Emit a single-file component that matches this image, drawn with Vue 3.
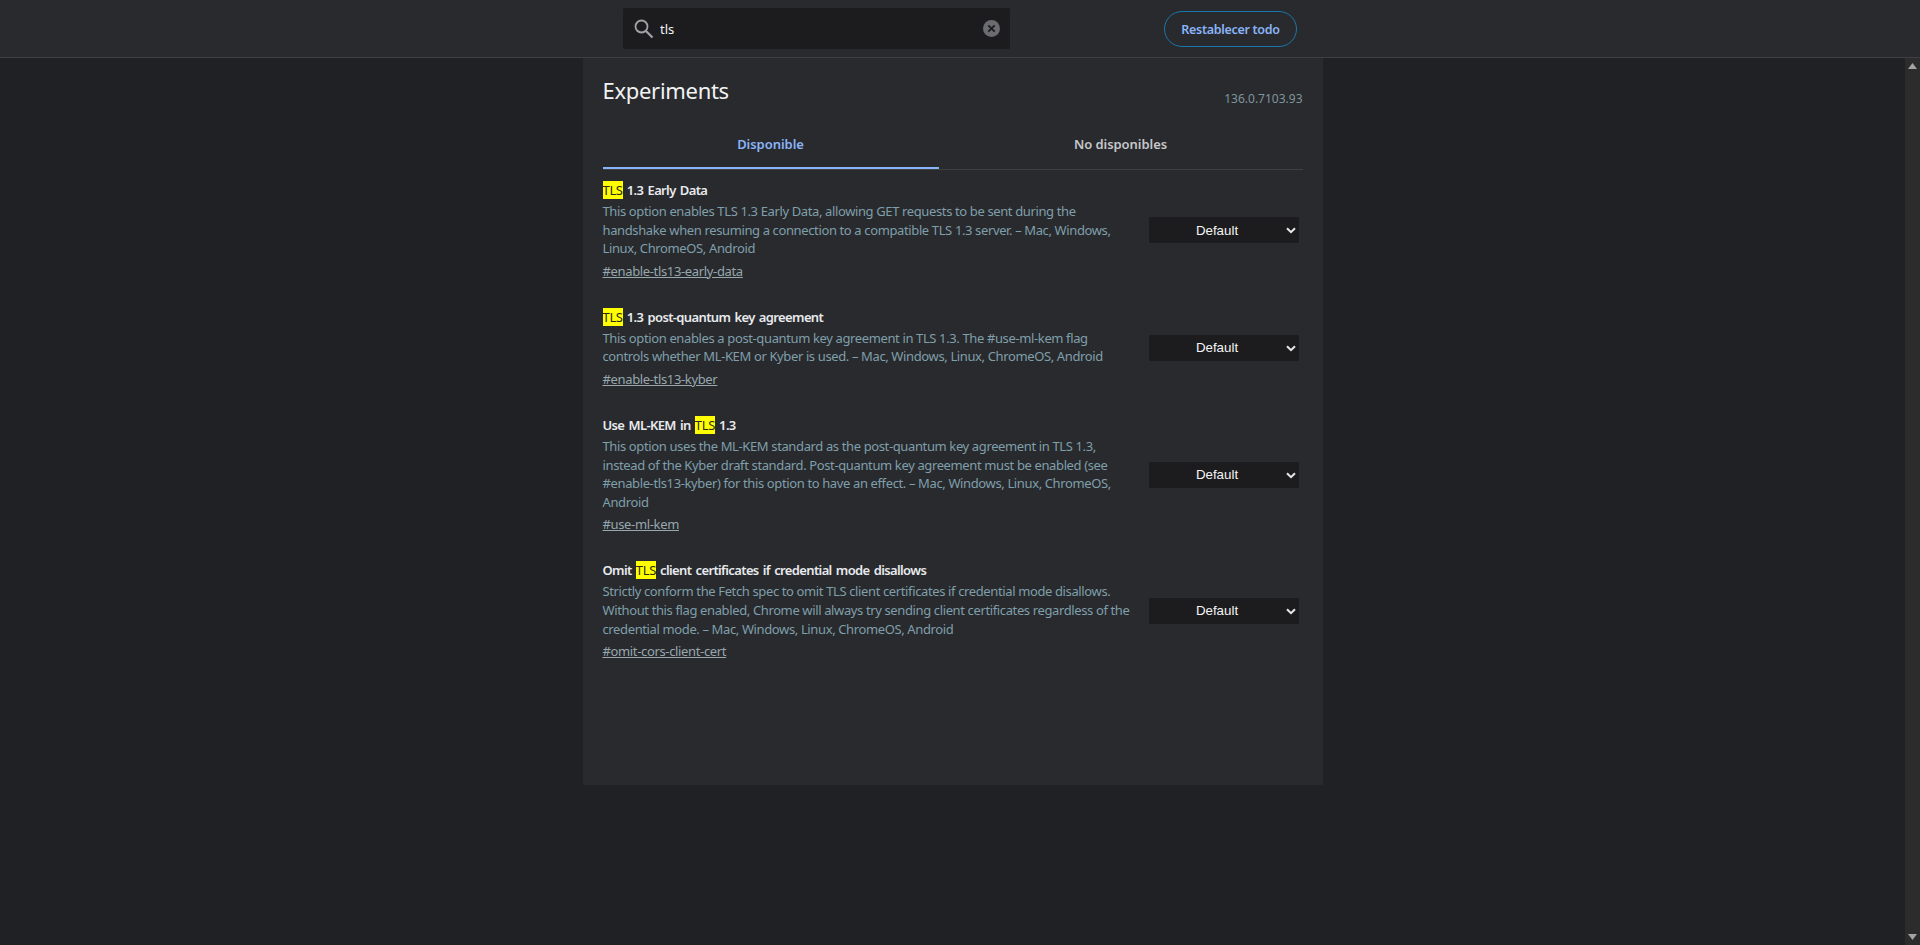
<script setup>
const flags = [
  {
    name: ['', 'TLS', ' 1.3 Early Data'],
    lines: [
      'This option enables TLS 1.3 Early Data, allowing GET requests to be sent during the',
      'handshake when resuming a connection to a compatible TLS 1.3 server. – Mac, Windows,',
      'Linux, ChromeOS, Android'
    ],
    link: '#enable-tls13-early-data'
  },
  {
    name: ['', 'TLS', ' 1.3 post-quantum key agreement'],
    lines: [
      'This option enables a post-quantum key agreement in TLS 1.3. The #use-ml-kem flag',
      'controls whether ML-KEM or Kyber is used. – Mac, Windows, Linux, ChromeOS, Android'
    ],
    link: '#enable-tls13-kyber'
  },
  {
    name: ['Use ML-KEM in ', 'TLS', ' 1.3'],
    lines: [
      'This option uses the ML-KEM standard as the post-quantum key agreement in TLS 1.3,',
      'instead of the Kyber draft standard. Post-quantum key agreement must be enabled (see',
      '#enable-tls13-kyber) for this option to have an effect. – Mac, Windows, Linux, ChromeOS,',
      'Android'
    ],
    link: '#use-ml-kem'
  },
  {
    name: ['Omit ', 'TLS', ' client certificates if credential mode disallows'],
    lines: [
      'Strictly conform the Fetch spec to omit TLS client certificates if credential mode disallows.',
      'Without this flag enabled, Chrome will always try sending client certificates regardless of the',
      'credential mode. – Mac, Windows, Linux, ChromeOS, Android'
    ],
    link: '#omit-cors-client-cert'
  }
]
</script>

<template>
  <div class="page">
    <header class="top">
      <div class="top-inner">
        <div class="search">
          <svg class="search-icon" viewBox="0 0 24 24" width="24" height="24">
            <circle cx="9.5" cy="9.5" r="6" fill="none" stroke="#a2a3a6" stroke-width="1.8" />
            <path d="M14 14l6.5 6.5" stroke="#a2a3a6" stroke-width="2.2" fill="none" />
          </svg>
          <span class="query">tls</span>
          <svg class="clear-icon" viewBox="0 0 16 16" width="17" height="17">
            <circle cx="8" cy="8" r="8" fill="#6b6c6f" />
            <path d="M5 5l6 6M11 5l-6 6" stroke="#1c1c1e" stroke-width="1.8" />
          </svg>
        </div>
        <button class="reset">Restablecer todo</button>
      </div>
    </header>
    <div class="body">
      <main class="main">
        <section class="panel">
          <div class="title-row">
            <h1>Experiments</h1>
            <span class="version">136.0.7103.93</span>
          </div>
          <div class="tabs">
            <div class="tab tab-active">Disponible</div>
            <div class="tab tab-other">No disponibles</div>
          </div>
          <div class="list">
            <article v-for="f in flags" :key="f.link" class="flag">
              <div class="flag-text">
                <div class="flag-name">{{ f.name[0] }}<mark>{{ f.name[1] }}</mark>{{ f.name[2] }}</div>
                <p class="flag-desc">
                  <span v-for="l in f.lines" :key="l" class="line">{{ l }}</span>
                </p>
                <a class="flag-link">{{ f.link }}</a>
              </div>
              <div class="select">
                <span>Default</span>
                <svg class="chev" viewBox="0 0 10 7" width="10" height="7">
                  <path d="M1 1.2l4 4 4-4" fill="none" stroke="#e8e8e8" stroke-width="2" />
                </svg>
              </div>
            </article>
          </div>
        </section>
      </main>
      <aside class="scrollbar">
        <svg viewBox="0 0 9 6" width="9" height="6"><path d="M4.5 0L9 6H0z" fill="#a3a3a3" /></svg>
        <svg viewBox="0 0 9 6" width="9" height="6"><path d="M0 0h9L4.5 6z" fill="#a3a3a3" /></svg>
      </aside>
    </div>
  </div>
</template>

<style>
html, body { margin: 0; background: #202124; }
</style>

<style scoped>
.page {
  height: 945px;
  display: flex;
  flex-direction: column;
  overflow: hidden;
  background: #202124;
  font-family: "Noto Sans", "Open Sans", sans-serif;
  font-size: 13px;
}
.top {
  height: 57px;
  flex: none;
  background: #292a2d;
  border-bottom: 1px solid #3f4043;
}
.top-inner {
  width: 740px;
  margin-left: 583px;
  padding: 8px 0 0 40px;
  box-sizing: border-box;
  display: flex;
  align-items: flex-start;
  height: 57px;
}
.search {
  width: 387px;
  height: 41px;
  background: #1c1c1e;
  border-radius: 2px;
  display: flex;
  align-items: center;
  box-sizing: border-box;
  padding: 0 10px 0 9px;
}
.search-icon { flex: none; }
.query {
  margin-left: 4px;
  color: #f1f1f1;
  font-size: 13px;
  flex: 1;
}
.clear-icon { flex: none; }
.reset {
  margin: 3px 0 0 154px;
  width: 133px;
  height: 36px;
  border-radius: 18px;
  border: 1px solid #1a77ad;
  background: transparent;
  color: #8ab4f8;
  font: 600 12.5px "Noto Sans", sans-serif;
  letter-spacing: -0.3px;
  padding: 0;
}
.body {
  flex: 1;
  display: flex;
  min-height: 0;
}
.main {
  flex: 1;
  display: flex;
  justify-content: center;
}
.panel {
  width: 740px;
  height: 727px;
  box-sizing: border-box;
  background: #292a2d;
  padding: 0 20px;
}
.title-row {
  display: flex;
  justify-content: space-between;
  height: 70px;
}
h1 {
  margin: 16px 0 0;
  font-weight: 400;
  font-size: 22px;
  line-height: 32px;
  color: #f1f3f4;
  letter-spacing: -0.3px;
}
.version {
  margin-top: 32px;
  color: #7f959e;
  font-size: 12px;
  line-height: 18px;
}
.tabs {
  display: flex;
  height: 42px;
  border-bottom: 1px solid #3f4043;
  box-sizing: border-box;
  font-size: 13px;
  font-weight: 600;
  letter-spacing: -0.05px;
}
.tab {
  display: flex;
  align-items: center;
  justify-content: center;
  padding-bottom: 7px;
  box-sizing: border-box;
}
.tab-active {
  width: 336px;
  color: #8ab4f8;
  border-bottom: 2px solid #8ab4f8;
  height: 41px;
}
.tab-other {
  width: 364px;
  height: 41px;
  padding-bottom: 9px;
  color: #c4c7cb;
}
.list {
  padding-top: 11px;
}
.flag {
  display: flex;
  align-items: center;
  justify-content: space-between;
  padding-right: 4px;
  margin-bottom: 26px;
}
.flag-name {
  font-weight: 600;
  color: #e8eaed;
  line-height: 19px;
  letter-spacing: -0.63px;
  word-spacing: 1.4px;
}
mark {
  background: #ffff00;
  color: #2b2b1a;
  font-weight: 400;
  letter-spacing: -0.35px;
}
.flag-desc {
  margin: 2px 0 2px;
  color: #7f9fab;
  line-height: 18.6px;
  letter-spacing: -0.375px;
}
.line {
  display: block;
  white-space: nowrap;
}
.flag-link {
  display: block;
  color: #96a7ad;
  text-decoration: underline;
  line-height: 22px;
  letter-spacing: -0.35px;
}
.select {
  width: 150px;
  height: 26px;
  flex: none;
  margin-top: -2px;
  background: #1c1c1e;
  border-radius: 1px;
  position: relative;
  display: flex;
  align-items: center;
  justify-content: center;
  color: #f4f4f4;
  font-family: "Liberation Sans", Arial, sans-serif;
  font-size: 13.33px;
  box-sizing: border-box;
  padding-right: 13px;
}
.chev {
  position: absolute;
  right: 3px;
  top: 10px;
}
.scrollbar {
  width: 15px;
  flex: none;
  background: #2c2c2c;
  display: flex;
  flex-direction: column;
  justify-content: space-between;
  align-items: center;
  padding: 5px 0 5px;
  box-sizing: border-box;
}
</style>
